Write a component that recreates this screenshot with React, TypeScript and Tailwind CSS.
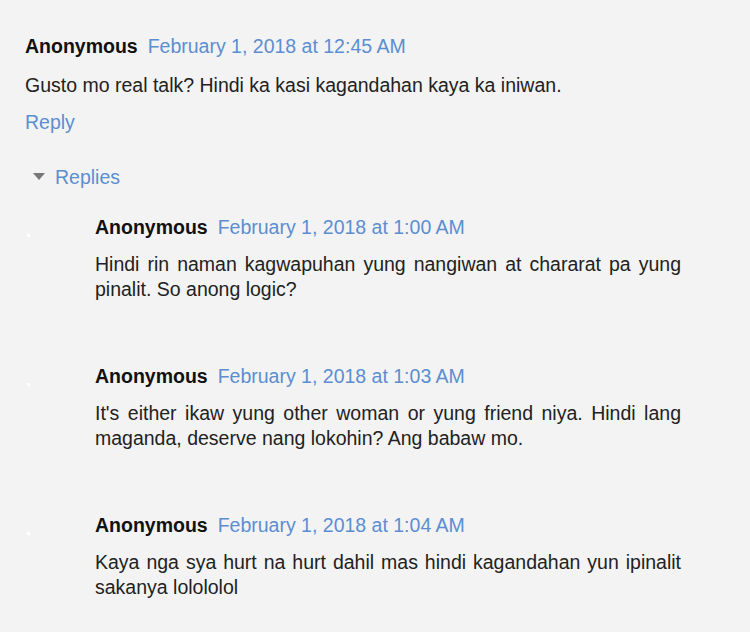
const font = { fontFamily: '"Liberation Sans", Arial, sans-serif' };

interface ReplyItem {
  date: string;
  body: string;
}

const replies: ReplyItem[] = [
  {
    date: 'February 1, 2018 at 1:00 AM',
    body: 'Hindi rin naman kagwapuhan yung nangiwan at chararat pa yung pinalit. So anong logic?',
  },
  {
    date: 'February 1, 2018 at 1:03 AM',
    body: "It's either ikaw yung other woman or yung friend niya. Hindi lang maganda, deserve nang lokohin? Ang babaw mo.",
  },
  {
    date: 'February 1, 2018 at 1:04 AM',
    body: 'Kaya nga sya hurt na hurt dahil mas hindi kagandahan yun ipinalit sakanya lolololol',
  },
];

function Header({ date }: { date: string }) {
  return (
    <div className="flex items-baseline gap-[10px]">
      <span className="font-bold text-[#111]">Anonymous</span>
      <a className="text-[#5b8ed1]">{date}</a>
    </div>
  );
}

function Reply({ item }: { item: ReplyItem }) {
  return (
    <div className="flex">
      <div className="w-[70px] shrink-0 pt-[19px] pl-[2px]">
        <div className="h-[3px] w-[3px] bg-white" />
      </div>
      <div className="w-[586px]">
        <Header date={item.date} />
        <p className="mt-[12px] text-justify text-[#222]">{item.body}</p>
      </div>
    </div>
  );
}

export default function App() {
  return (
    <div className="min-h-[632px] w-[750px] bg-[#f3f3f3] pl-[25px] pt-[34px] text-[19.5px] leading-[25px]" style={font}>
      <Header date="February 1, 2018 at 12:45 AM" />
      <p className="mt-[14px] text-[#222]">Gusto mo real talk? Hindi ka kasi kagandahan kaya ka iniwan.</p>
      <a className="mt-[12px] block text-[#5b8ed1]">Reply</a>
      <div className="mt-[30px] flex items-center gap-[10px] pl-[8px]">
        <svg width="12" height="7" viewBox="0 0 12 7" className="mt-[-2px]">
          <polygon points="0,0 12,0 6,7" fill="#777" />
        </svg>
        <span className="text-[#5b8ed1]">Replies</span>
      </div>
      <div className="mt-[25px] flex flex-col gap-[62px]">
        {replies.map((item) => (
          <Reply key={item.date} item={item} />
        ))}
      </div>
    </div>
  );
}
